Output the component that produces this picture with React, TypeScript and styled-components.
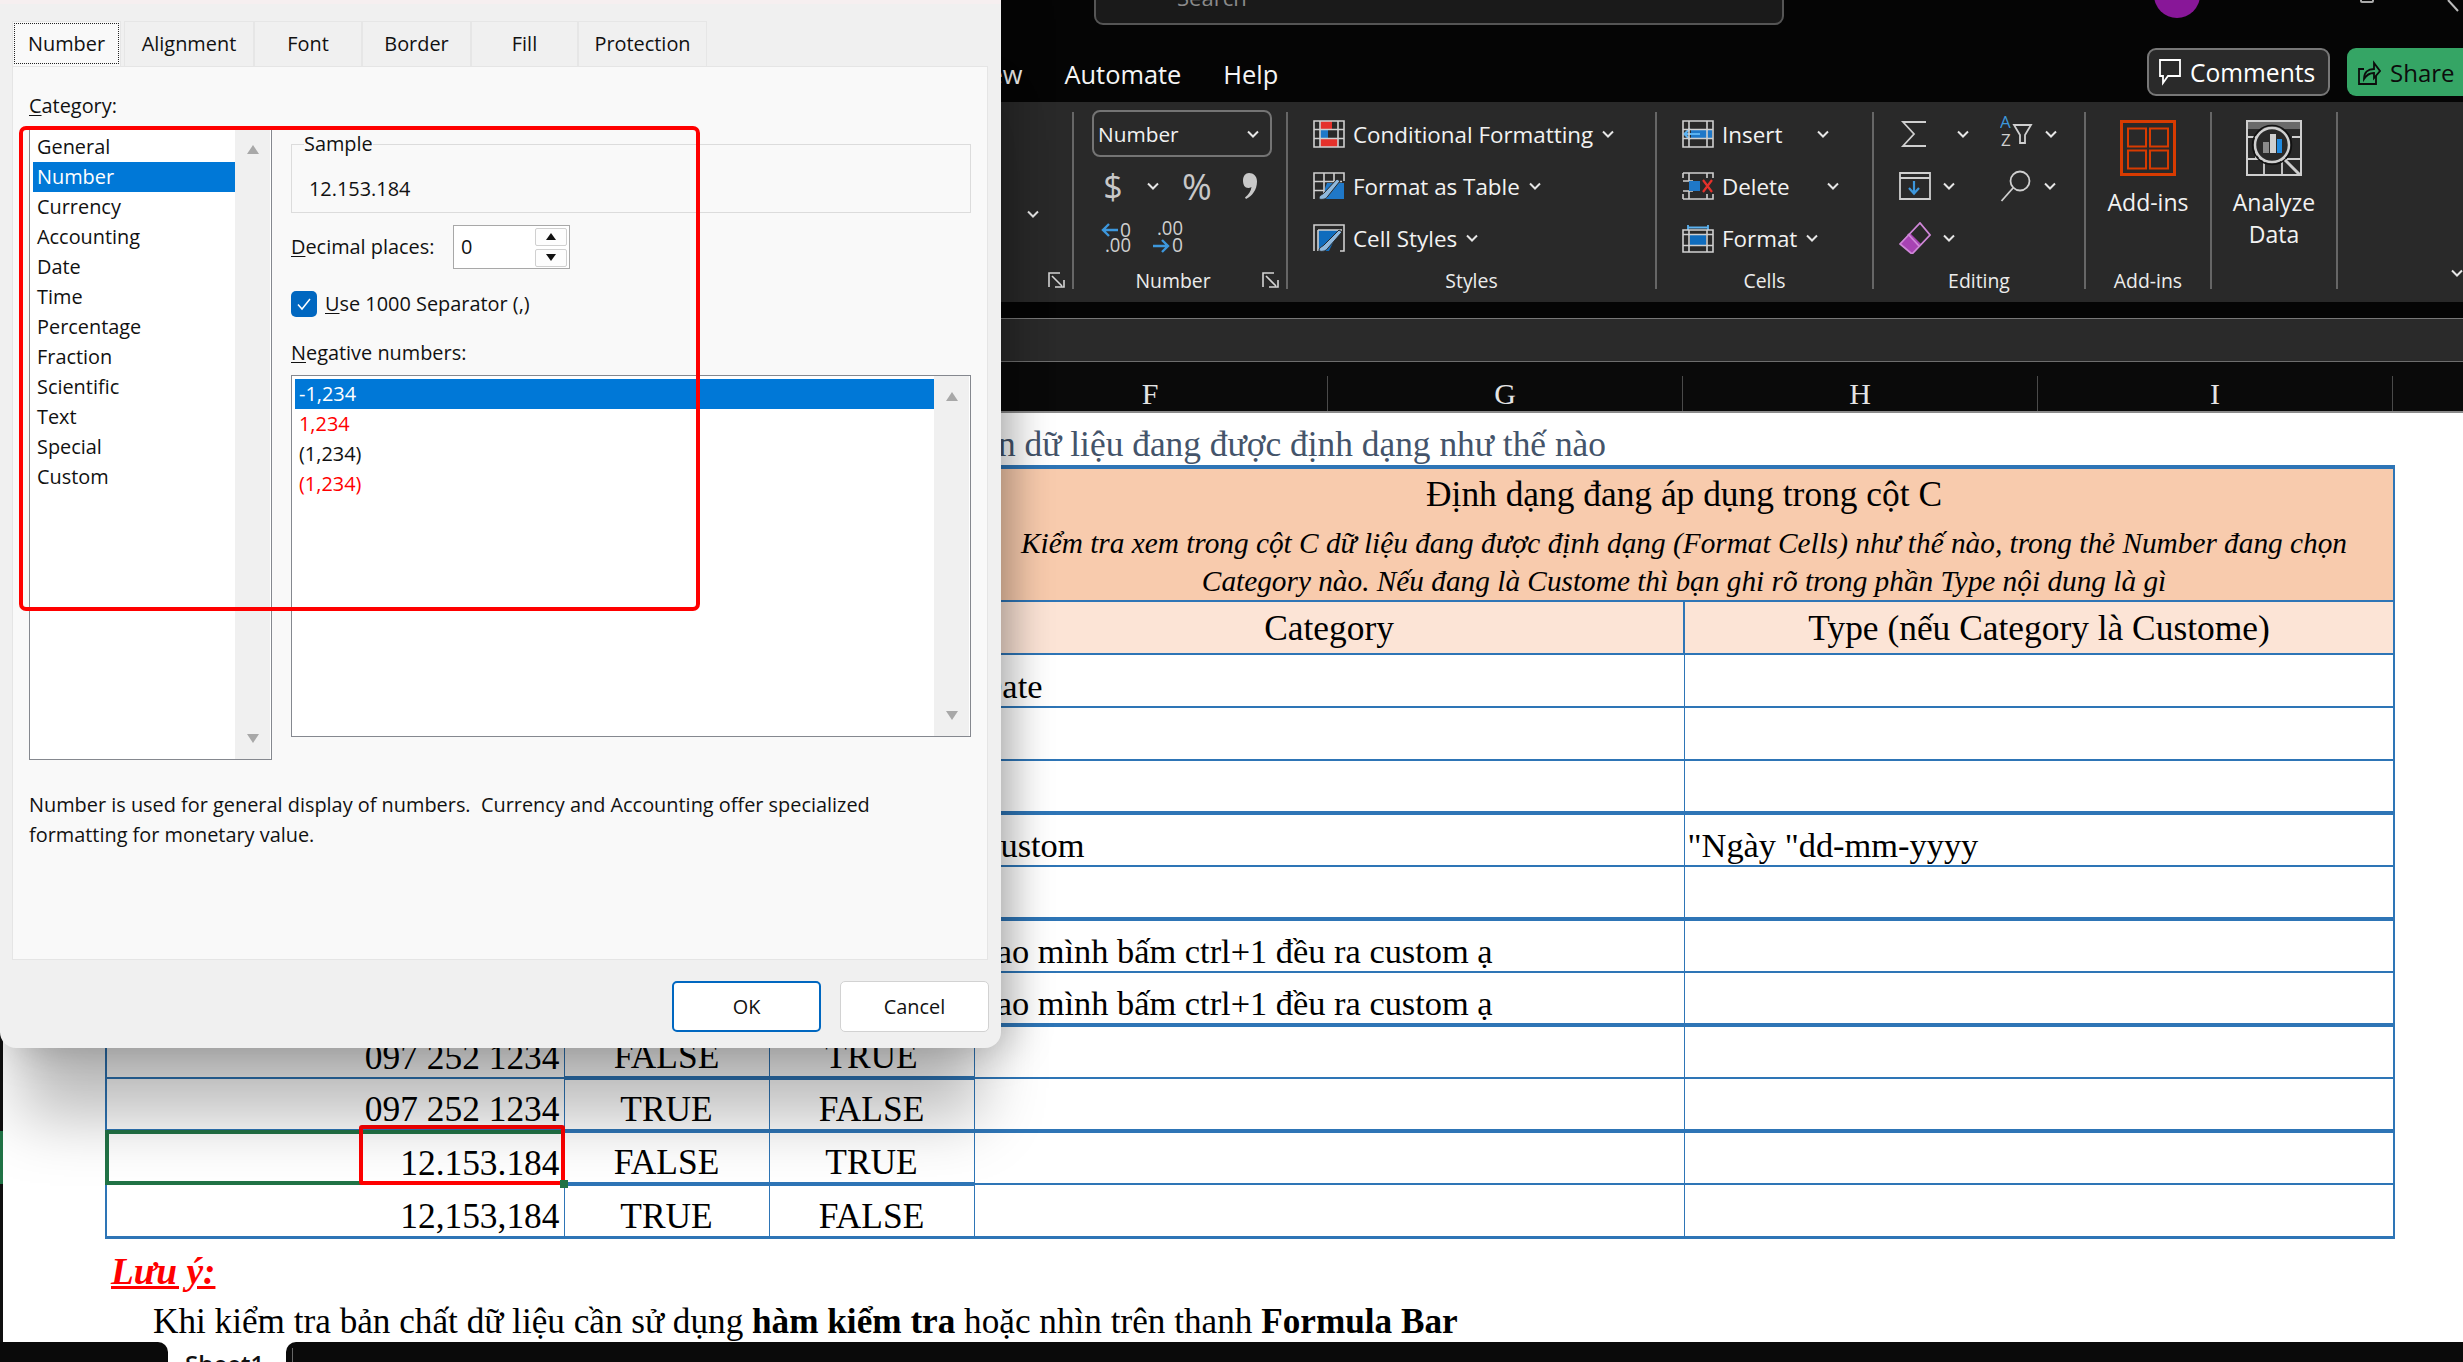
import React from 'react'
import styled, { createGlobalStyle } from 'styled-components'

const ui = `'Open Sans', 'Noto Sans', sans-serif`
const serif = `'Liberation Serif', 'Times New Roman', serif`

const Global = createGlobalStyle`
  html, body { margin: 0; padding: 0; background: #050505; }
  * { box-sizing: border-box; }
`

const Page = styled.div`
  position: relative;
  width: 2463px;
  height: 1362px;
  overflow: hidden;
  display: flex;
  flex-direction: column;
  background: #050505;
  font-family: ${ui};
`

/* title bar */
const TitleBar = styled.div`
  height: 50px;
  flex: none;
  display: flex;
  align-items: flex-start;
  padding-left: 1094px;
  > * {
    flex: none;
  }
`
const SearchBox = styled.div`
  width: 690px;
  height: 40px;
  margin-top: -15px;
  display: flex;
  gap: 41px;
  padding-left: 24px;
  background: #1a1a1a;
  border: 2px solid #555;
  border-radius: 9px;
  color: #8a8a8a;
  font-size: 22px;
  line-height: 20px;
`
const SearchGlyph = styled.svg`
  margin-top: -6px;
`
const Avatar = styled.div`
  width: 46px;
  height: 46px;
  margin: -28px 0 0 370px;
  border-radius: 50%;
  background: #881798;
  color: #fff;
  font-size: 18px;
  line-height: 36px;
  text-align: center;
`
const RestoreBtn = styled.div`
  width: 14px;
  height: 14px;
  margin: -11px 0 0 160px;
  border: 2px solid #aaa;
  border-radius: 2px;
`
const CloseGlyph = styled.svg`
  margin-left: 72px;
`

/* menu row */
const MenuRow = styled.div`
  height: 52px;
  flex: none;
  display: flex;
  align-items: flex-start;
  padding-left: 967px;
`
const MenuItem = styled.span`
  color: #f5f5f5;
  font-size: 25.4px;
  line-height: 48px;
  margin-right: 42px;
`
const CommentsBtn = styled.div`
  margin-left: auto;
  width: 183px;
  height: 48px;
  margin-top: -2px;
  display: flex;
  align-items: center;
  gap: 9px;
  padding-left: 10px;
  background: #2a2a2a;
  border: 2px solid #777;
  border-radius: 9px;
  color: #fff;
  font-size: 24.6px;
`
const ShareBtn = styled.div`
  width: 116px;
  height: 48px;
  margin: -2px 0 0 17px;
  display: flex;
  align-items: center;
  gap: 9px;
  padding-left: 10px;
  background: #35a565;
  border-radius: 9px 0 0 9px;
  color: #0c0c0c;
  font-size: 24px;
`

/* ribbon */
const Ribbon = styled.div`
  height: 200px;
  flex: none;
  display: flex;
  align-items: flex-start;
  padding-top: 10px;
  background: #292929;
  color: #f2f2f2;
`
const Group = styled.div<{ $w: number; $pad?: number }>`
  width: ${(p) => p.$w}px;
  height: 177px;
  flex: none;
  display: flex;
  flex-direction: column;
  padding-left: ${(p) => p.$pad ?? 0}px;
  border-right: 2px solid #666;
`
const GroupBody = styled.div`
  flex: 1;
  min-height: 0;
  margin-top: -4px;
  display: flex;
  flex-direction: column;
`
const GroupFoot = styled.div<{ $pad?: number }>`
  height: 28px;
  margin-bottom: -5px;
  flex: none;
  display: flex;
  align-items: center;
  padding-right: ${(p) => p.$pad ?? 0}px;
`
const GroupLabel = styled.span<{ $shift?: number }>`
  flex: 1;
  text-align: center;
  font-size: 19.4px;
  color: #ececec;
  margin-right: ${(p) => p.$shift ?? 0}px;
`
const ToolRow = styled.div`
  height: 52px;
  flex: none;
  display: flex;
  align-items: center;
`
const ToolText = styled.span<{ $gap?: number }>`
  margin-left: 8px;
  margin-right: ${(p) => p.$gap ?? 9}px;
  font-size: 22.4px;
  white-space: nowrap;
`
const EdgeChevron = styled.div`
  height: 212px;
  flex: none;
  display: flex;
  align-items: center;
  justify-content: flex-end;
  padding-right: 33px;
`
const NumberSelect = styled.div`
  width: 180px;
  height: 47px;
  margin: 2px 0 3px;
  flex: none;
  display: flex;
  align-items: center;
  justify-content: space-between;
  padding: 0 11px 0 4px;
  border: 2px solid #747474;
  border-radius: 8px;
  font-size: 20.8px;
`
const NumCell = styled.span<{ $w: number; $size?: number }>`
  width: ${(p) => p.$w}px;
  flex: none;
  display: flex;
  justify-content: center;
  color: #c8c8c8;
  font-size: ${(p) => p.$size ?? 30}px;
`
const BigTool = styled.div`
  padding-top: 12px;
  display: flex;
  flex-direction: column;
  align-items: center;
  gap: 10px;
  font-size: 23px;
  line-height: 32px;
  text-align: center;
`
const EditGrid = styled.div`
  display: grid;
  grid-template-columns: 101px 1fr;
  grid-auto-rows: 52px;
  align-items: center;
`
const EditTool = styled.div<{ $gap: number }>`
  display: flex;
  align-items: center;
  gap: ${(p) => p.$gap}px;
`
const TailCell = styled.div`
  flex: 1;
  display: flex;
  align-items: flex-end;
  justify-content: flex-end;
  height: 177px;
  padding-bottom: 12px;
`
const Icon = styled.svg`
  flex: none;
`
const RaisedIcon = styled.svg`
  flex: none;
  margin-top: -6px;
`

/* formula bar and headers */
const FormulaGap = styled.div`
  height: 16px;
  flex: none;
  background: #050505;
`
const FormulaBar = styled.div`
  height: 44px;
  flex: none;
  background: #2a2a2a;
  border-top: 1px solid #777;
  border-bottom: 1px solid #6e6e6e;
`
const ColHeaders = styled.div`
  height: 51px;
  flex: none;
  display: flex;
  padding-left: 973px;
  background: #0a0a0a;
  border-bottom: 2px solid #8a8a8a;
`
const ColHead = styled.div<{ $open?: boolean }>`
  width: 355px;
  flex: none;
  margin-top: 14px;
  border-right: ${(p) => (p.$open ? 'none' : '1px solid #4a4a4a')};
  color: #e4e4e4;
  font-family: ${serif};
  font-size: 30px;
  line-height: 36px;
  text-align: center;
`

/* sheet */
const Sheet = styled.div`
  flex: 1;
  min-height: 0;
  display: flex;
  background: #fff;
  overflow: hidden;
`
const Gutter = styled.div`
  width: 3px;
  flex: none;
  background: #101010;
`
const GutterMark = styled.div`
  height: 53px;
  margin-top: 718px;
  background: #217346;
`
const SheetBody = styled.div`
  padding-left: 102px;
  font-family: ${serif};
  font-size: 35.4px;
  color: #000;
`
const SheetTitle = styled.div`
  height: 52px;
  padding-left: 893px;
  line-height: 62px;
  color: #44546a;
  white-space: nowrap;
`
const Table = styled.table`
  width: 2288px;
  table-layout: fixed;
  border-collapse: collapse;
  border-top: 4px solid #2e75b6;
  border-left: 2px solid #2e75b6;
  border-right: 2px solid #2e75b6;
  border-bottom: 3px solid #2e75b6;
`
const Col = styled.col<{ $w: number }>`
  width: ${(p) => p.$w}px;
`
const HeadRow = styled.tr`
  height: 53px;
`
const HeadCell = styled.th<{ $bg: string }>`
  padding: 0;
  background: ${(p) => p.$bg};
  border: 2px solid #2e75b6;
  font-weight: 400;
  text-align: center;
`
const HeadTitle = styled.div`
  line-height: 50px;
`
const HeadNote = styled.div`
  margin-top: 6px;
  font-style: italic;
  font-size: 29.3px;
  line-height: 37.5px;
`
const Row = styled.tr<{ $h: number; $thick?: boolean; $midThick?: boolean }>`
  height: ${(p) => p.$h}px;
  td {
    border-bottom: ${(p) => (p.$thick ? '4px' : '2px')} solid #2e75b6;
  }
  td:nth-child(2),
  td:nth-child(3) {
    border-bottom-width: ${(p) => (p.$thick || p.$midThick ? '4px' : '2px')};
  }
`
const Cell = styled.td<{ $align?: string }>`
  position: relative;
  padding: 0 4px;
  border-left: 1px solid #2e75b6;
  border-right: 1px solid #2e75b6;
  text-align: ${(p) => p.$align ?? 'left'};
  vertical-align: bottom;
  line-height: 40px;
  white-space: nowrap;
`
const TextCell = styled(Cell)`
  padding-left: 3px;
  font-size: 34.4px;
`
const SelectedCell = styled(Cell)`
  outline: 4px solid #217346;
  outline-offset: -3px;
`
const FillHandle = styled.span`
  position: absolute;
  right: -4px;
  bottom: -5px;
  width: 8px;
  height: 8px;
  background: #217346;
`
const CellMark = styled.span`
  position: absolute;
  right: -1px;
  top: -8px;
  width: 206px;
  height: 60px;
  border: 4px solid #ff0000;
  border-radius: 3px;
`
const NoteHead = styled.div`
  height: 55px;
  padding: 12px 0 0 6px;
`
const NoteHeadText = styled.span`
  color: #ff0000;
  font-weight: 700;
  font-style: italic;
  font-size: 37.4px;
  line-height: 40px;
  text-decoration: underline;
`
const NoteLine = styled.div`
  padding: 2px 0 0 48px;
  font-size: 35.2px;
  line-height: 52px;
  white-space: nowrap;
`

/* tabs at the bottom */
const TabStrip = styled.div`
  height: 20px;
  flex: none;
  display: flex;
  background: #fff;
`
const TabLeft = styled.div`
  width: 168px;
  background: #0a0a0a;
  border-radius: 0 10px 0 0;
`
const SheetTab = styled.div`
  width: 118px;
  padding: 7px 0 0 17px;
  font-size: 24px;
  font-weight: 600;
  line-height: 30px;
  color: #111;
`
const TabRight = styled.div`
  flex: 1;
  padding-left: 6px;
  background: #0a0a0a;
  border-radius: 10px 0 0 0;
`
const TabTick = styled.div`
  width: 1px;
  height: 20px;
  margin-top: 6px;
  background: #666;
`

/* Format Cells dialog */
const Dialog = styled.div`
  position: absolute;
  left: 0;
  top: 0;
  z-index: 10;
  width: 1001px;
  height: 1048px;
  padding-top: 17px;
  background: #f0f0f0;
  border-top: 4px solid #f6eff0;
  border-radius: 0 0 16px 16px;
  box-shadow: 0 90px 60px -20px rgba(0, 0, 0, 0.26), 12px 0 40px rgba(0, 0, 0, 0.26);
  color: #111;
  font-size: 19.9px;
  line-height: 30px;
`
const TabBar = styled.div`
  height: 45px;
  display: flex;
  padding-left: 12px;
`
const DialogTab = styled.div<{ $w: number; $active?: boolean }>`
  width: ${(p) => p.$w}px;
  display: flex;
  align-items: center;
  justify-content: center;
  border: 1px solid #e6e6e6;
  border-bottom: none;
  margin-right: ${(p) => (p.$active ? 3 : 0)}px;
  background: ${(p) => (p.$active ? '#f9f9f9' : '#f0f0f0')};
  outline: ${(p) => (p.$active ? '1px dotted #222' : 'none')};
  outline-offset: -3px;
`
const TabPanel = styled.div`
  height: 894px;
  margin: 0 13px 0 12px;
  padding: 24px 16px 0;
  background: #f9f9f9;
  border: 1px solid #e5e5e5;
`
const Key = styled.u`
  text-underline-offset: 2px;
`
const Columns = styled.div`
  display: flex;
  gap: 19px;
  margin-top: 7px;
`
const ListBox = styled.div<{ $w: number; $h: number }>`
  width: ${(p) => p.$w}px;
  height: ${(p) => p.$h}px;
  flex: none;
  display: flex;
  padding: 3px 1px 0 3px;
  background: #fff;
  border: 1px solid #85888f;
`
const ListItems = styled.div`
  flex: 1;
  min-width: 0;
`
const ListItem = styled.div<{ $selected?: boolean; $red?: boolean }>`
  height: 30px;
  padding-left: 4px;
  background: ${(p) => (p.$selected ? '#0078d7' : 'transparent')};
  color: ${(p) => (p.$selected ? '#fff' : p.$red ? '#ff0000' : '#111')};
`
const ScrollTrack = styled.div`
  width: 35px;
  flex: none;
  margin-top: -3px;
  display: flex;
  flex-direction: column;
  align-items: center;
  justify-content: space-between;
  padding: 16px 0;
  background: #f0f0f0;
`
const Arrow = styled.span<{ $down?: boolean }>`
  width: 0;
  height: 0;
  border-left: 6px solid transparent;
  border-right: 6px solid transparent;
  border-${(p) => (p.$down ? 'top' : 'bottom')}: 9px solid #a8a8a8;
`
const RightCol = styled.div`
  width: 680px;
  flex: none;
`
const SampleBox = styled.fieldset`
  height: 83px;
  margin: 2px 0 0;
  padding: 16px 0 0 17px;
  border: 1px solid #dcdcdc;
`
const SampleLegend = styled.legend`
  margin-left: -5px;
  padding: 0;
  line-height: 28px;
`
const DecimalRow = styled.div`
  height: 44px;
  margin-top: 12px;
  display: flex;
  align-items: center;
`
const DecimalLabel = styled.span`
  width: 162px;
  flex: none;
`
const SpinBox = styled.div`
  width: 117px;
  height: 44px;
  display: flex;
  justify-content: space-between;
  align-items: center;
  padding: 0 2px 0 7px;
  background: #fff;
  border: 1px solid #a8a8a8;
`
const SpinButtons = styled.div`
  display: flex;
  flex-direction: column;
  gap: 3px;
`
const SpinButton = styled.div`
  width: 32px;
  height: 18px;
  display: flex;
  align-items: center;
  justify-content: center;
  background: #fdfdfd;
  border: 1px solid #d0d0d0;
  border-radius: 2px;
`
const SpinArrow = styled.span<{ $down?: boolean }>`
  width: 0;
  height: 0;
  border-left: 5px solid transparent;
  border-right: 5px solid transparent;
  border-${(p) => (p.$down ? 'top' : 'bottom')}: 7px solid #111;
`
const CheckRow = styled.div`
  height: 26px;
  margin-top: 22px;
  display: flex;
  align-items: center;
  gap: 8px;
`
const CheckBox = styled.span`
  width: 26px;
  height: 26px;
  display: flex;
  align-items: center;
  justify-content: center;
  background: #0067c0;
  border-radius: 5px;
`
const NegLabel = styled.div`
  margin: 21px 0 7px;
`
const Description = styled.div`
  margin-top: 30px;
  white-space: nowrap;
`
const DialogFooter = styled.div`
  display: flex;
  justify-content: flex-end;
  gap: 19px;
  margin-top: 21px;
  padding-right: 12px;
`
const DialogButton = styled.div<{ $primary?: boolean }>`
  width: 149px;
  height: 51px;
  display: flex;
  align-items: center;
  justify-content: center;
  background: #fff;
  border: ${(p) => (p.$primary ? '2px solid #0067c0' : '1px solid #d2d2d2')};
  border-radius: 5px;
`
const RedFrame = styled.div`
  position: absolute;
  left: 19px;
  top: 122px;
  width: 681px;
  height: 485px;
  border: 4px solid #ff0000;
  border-radius: 7px;
  pointer-events: none;
`

/* icons */
const G = '#cfcfcf'
const B = '#1f78c8'
const R = '#e5312b'

const Chevron = () => (
  <Icon width="12" height="8" viewBox="0 0 12 8" fill="none" stroke="#e6e6e6" strokeWidth="2">
    <path d="M1 1.5l5 5 5-5" />
  </Icon>
)
const Launcher = () => (
  <Icon width="17" height="16" viewBox="0 0 17 16" fill="none" stroke="#d4d4d4" strokeWidth="1.6">
    <path d="M1 15V1h11M4 4l10 10M7 15h9V8" />
  </Icon>
)
const TableGrid = ({ children }: { children?: React.ReactNode }) => (
  <Icon width="32" height="28" viewBox="0 0 32 28" fill="none">
    {children}
    <path d="M1 1h30v26H1zM7 1v26M25 1v26M1 9.5h30M1 18.5h30" stroke={G} strokeWidth="1.6" />
  </Icon>
)
const CondIcon = () => (
  <TableGrid>
    <rect x="7" y="1" width="12" height="8" fill={R} />
    <rect x="7" y="10" width="8" height="8" fill={B} />
    <rect x="7" y="19" width="18" height="8" fill={R} />
  </TableGrid>
)
const TableIcon = () => (
  <Icon width="32" height="28" viewBox="0 0 32 28" fill="none">
    <path d="M14 11h17v16H8z" fill={B} />
    <path d="M1 27V1h30v8M1 9.5h28M11 1v26M21 1v8M1 18.5h10" stroke={G} strokeWidth="1.6" />
    <path d="M6 27c0-4 3-4 5-6l13-14 3 2-12 15c-2 3-5 4-9 3z" fill="#8fb8dc" stroke="#292929" strokeWidth="1" />
  </Icon>
)
const StyleIcon = () => (
  <Icon width="32" height="28" viewBox="0 0 32 28" fill="none">
    <path d="M5 6h21L16 27H5z" fill="#0f6cbd" />
    <path d="M1 27V1h30v26h-4M5 6h24M5 6v21" stroke={G} strokeWidth="1.6" />
    <path d="M6 27c0-4 3-4 5-6l15-15 3 2-14 16c-2 3-5 4-9 3z" fill="#8fb8dc" stroke="#292929" strokeWidth="1" />
  </Icon>
)
const InsertIcon = () => (
  <TableGrid>
    <rect x="9" y="10" width="21" height="8" fill={B} />
    <path d="M18 14H3M8 8.5L2.5 14 8 19.5" stroke="#5cb2f0" strokeWidth="2.2" />
  </TableGrid>
)
const DeleteIcon = () => (
  <Icon width="32" height="28" viewBox="0 0 32 28" fill="none">
    <path d="M1 1h30v5M1 1v5M1 27h30v-5M1 27v-5M7 1v8M25 1v5M7 19v8M25 22v5M1 9h10M1 19h10" stroke={G} strokeWidth="1.6" />
    <rect x="7" y="9" width="11" height="10" fill={B} />
    <path d="M21 8l9 12M30 8l-9 12" stroke={R} strokeWidth="2.2" />
  </Icon>
)
const FormatIcon = () => (
  <Icon width="32" height="30" viewBox="0 0 32 30" fill="none">
    <path d="M6 2v5M26 2v5M6 4.5h20" stroke="#5cb2f0" strokeWidth="1.8" />
    <rect x="8" y="11" width="16" height="11" fill="#0f6cbd" />
    <path d="M1 7h30v22H1zM7 7v22M25 7v22M1 11.5h30M1 22.5h30" stroke={G} strokeWidth="1.6" />
  </Icon>
)
const SigmaIcon = () => (
  <Icon width="30" height="28" viewBox="-2 0 30 28" fill="none" stroke={G} strokeWidth="1.8">
    <path d="M25 2H2l11 12L2 26h23" />
  </Icon>
)
const SortIcon = () => (
  <RaisedIcon width="34" height="34" viewBox="0 0 34 34" fill="none">
    <text x="0" y="14" fontFamily={ui} fontSize="17" fill="#3d97dc">A</text>
    <text x="1" y="32" fontFamily={ui} fontSize="17" fill={G}>Z</text>
    <path d="M14 11h17l-6 10v8h-5v-8z" stroke={G} strokeWidth="1.8" />
  </RaisedIcon>
)
const FillIcon = () => (
  <Icon width="32" height="28" viewBox="0 0 32 28" fill="none">
    <path d="M1 1h30v26H1zM1 6h30" stroke={G} strokeWidth="1.8" />
    <path d="M15 9v12M10 16l5 5.5 5-5.5" stroke="#3d97dc" strokeWidth="2.2" />
  </Icon>
)
const FindIcon = () => (
  <Icon width="32" height="32" viewBox="0 0 32 32" fill="none" stroke={G} strokeWidth="1.8">
    <circle cx="20" cy="11" r="9.5" />
    <path d="M13 18L1.5 31" />
  </Icon>
)
const EraserIcon = () => (
  <Icon width="32" height="32" viewBox="0 0 32 32" fill="none">
    <path d="M1 22l10-11 11 11-9 10z" fill="#a743b3" />
    <path d="M1 22L21 1l10 12-18 19z" stroke="#cf86d8" strokeWidth="1.8" />
    <path d="M9 12l11 12" stroke="#cf86d8" strokeWidth="1.8" />
  </Icon>
)
const AddinsIcon = () => (
  <Icon width="56" height="56" viewBox="0 0 56 56" fill="none" stroke="#d83b01">
    <rect x="1.5" y="1.5" width="53" height="53" strokeWidth="3" />
    <path d="M8 8.5h18v18H8zM30 8.5h18v18H30zM8 30.5h18v18H8zM30 30.5h18v18H30z" strokeWidth="2" />
  </Icon>
)
const AnalyzeIcon = () => (
  <Icon width="56" height="56" viewBox="0 0 56 56" fill="none">
    <rect x="1" y="1" width="54" height="54" stroke={G} strokeWidth="2" />
    <rect x="2" y="2" width="52" height="7" fill="#6a6a6a" />
    <path d="M1 17h9M46 17h9M1 39h22M33 39h22M18 39v16M36 39v16M10 17v22" stroke={G} strokeWidth="1.8" />
    <circle cx="26" cy="25" r="17" fill="#292929" stroke={G} strokeWidth="2.5" />
    <circle cx="26" cy="25" r="19.5" stroke="#111" strokeWidth="1.5" />
    <rect x="17" y="22" width="6" height="11" fill="#8a8a8a" />
    <rect x="24" y="14" width="6" height="19" fill={G} />
    <rect x="31" y="19" width="5" height="14" fill="#1f8ae0" />
    <path d="M39 40l15 15" stroke={G} strokeWidth="3" />
  </Icon>
)
const CommentIcon = () => (
  <Icon width="22" height="30" viewBox="0 0 22 30" fill="none" stroke="#fff" strokeWidth="1.8">
    <path d="M1 3h20v16H9l-5 7v-7H1z" />
  </Icon>
)
const ShareIcon = () => (
  <Icon width="24" height="32" viewBox="0 0 24 32" fill="none" stroke="#0c0c0c" strokeWidth="1.8">
    <path d="M7 13H2v15h17v-8" />
    <path d="M7 23c0-7 4-10 10-10V7l6 8-6 7v-5c-4 0-7 1-10 6z" />
  </Icon>
)
const CommaIcon = () => (
  <Icon width="16" height="28" viewBox="0 0 16 28" fill="#c8c8c8">
    <path d="M7 1c4.5 0 8 3 8 8.500C15 18 10 24 4 27l-1-1.5c3.5-3 6-6.500 6.500-10.500-1 .6-2 1-3.200 1C2.800 16 1 13 1 8.500 1 4 3.500 1 7 1z" />
  </Icon>
)
const DecLeftIcon = () => (
  <Icon width="32" height="46" viewBox="0 0 32 46" fill="none">
    <path d="M17 15H2M8 9l-6 6 6 6" stroke="#3d97dc" strokeWidth="2.4" />
    <text x="19" y="22" fontFamily={ui} fontSize="20" textLength="11" lengthAdjust="spacingAndGlyphs" fill={G}>0</text>
    <text x="4" y="37" fontFamily={ui} fontSize="20" textLength="26" lengthAdjust="spacingAndGlyphs" fill={G}>.00</text>
  </Icon>
)
const DecRightIcon = () => (
  <Icon width="32" height="46" viewBox="0 0 32 46" fill="none">
    <text x="5" y="20" fontFamily={ui} fontSize="20" textLength="26" lengthAdjust="spacingAndGlyphs" fill={G}>.00</text>
    <path d="M1 31h15M10 25l6 6-6 6" stroke="#3d97dc" strokeWidth="2.4" />
    <text x="20" y="37" fontFamily={ui} fontSize="20" textLength="11" lengthAdjust="spacingAndGlyphs" fill={G}>0</text>
  </Icon>
)
const CheckMark = () => (
  <Icon width="16" height="14" viewBox="0 0 16 14" fill="none" stroke="#fff" strokeWidth="1.5">
    <path d="M2 7.5l4 4.5 8-10" />
  </Icon>
)

const categories = [
  'General',
  'Number',
  'Currency',
  'Accounting',
  'Date',
  'Time',
  'Percentage',
  'Fraction',
  'Scientific',
  'Text',
  'Special',
  'Custom',
]
const dialogTabs: [string, number][] = [
  ['Alignment', 130],
  ['Font', 108],
  ['Border', 109],
  ['Fill', 107],
  ['Protection', 129],
]
const negatives: { label: string; red?: boolean; selected?: boolean }[] = [
  { label: '-1,234', selected: true },
  { label: '1,234', red: true },
  { label: '(1,234)' },
  { label: '(1,234)', red: true },
]

type SheetRow = {
  h: number
  value?: string
  d?: string
  e?: string
  category?: string
  type?: string
  thick?: boolean
  midThick?: boolean
  selected?: boolean
}
const rows: SheetRow[] = [
  { h: 53, category: 'Date' },
  { h: 53 },
  { h: 53, thick: true },
  { h: 53, category: 'Custom', type: '"Ngày "dd-mm-yyyy' },
  { h: 53, thick: true },
  { h: 53, category: 'Sao mình bấm ctrl+1 đều ra custom ạ' },
  { h: 53, category: 'Sao mình bấm ctrl+1 đều ra custom ạ', thick: true },
  { h: 53, value: '097 252 1234', d: 'FALSE', e: 'TRUE', midThick: true },
  { h: 53, value: '097 252 1234', d: 'TRUE', e: 'FALSE', thick: true },
  { h: 53, value: '12.153.184', d: 'FALSE', e: 'TRUE', selected: true, midThick: true },
  { h: 53, value: '12,153,184', d: 'TRUE', e: 'FALSE' },
]

const FormatCellsDialog = () => (
  <Dialog>
    <TabBar>
      <DialogTab $w={109} $active>
        Number
      </DialogTab>
      {dialogTabs.map(([label, w]) => (
        <DialogTab key={label} $w={w}>
          {label}
        </DialogTab>
      ))}
    </TabBar>
    <TabPanel>
      <div>
        <Key>C</Key>ategory:
      </div>
      <Columns>
        <ListBox $w={243} $h={632}>
          <ListItems>
            {categories.map((c) => (
              <ListItem key={c} $selected={c === 'Number'}>
                {c}
              </ListItem>
            ))}
          </ListItems>
          <ScrollTrack>
            <Arrow />
            <Arrow $down />
          </ScrollTrack>
        </ListBox>
        <RightCol>
          <SampleBox>
            <SampleLegend>Sample</SampleLegend>
            12.153.184
          </SampleBox>
          <DecimalRow>
            <DecimalLabel>
              <Key>D</Key>ecimal places:
            </DecimalLabel>
            <SpinBox>
              0
              <SpinButtons>
                <SpinButton>
                  <SpinArrow />
                </SpinButton>
                <SpinButton>
                  <SpinArrow $down />
                </SpinButton>
              </SpinButtons>
            </SpinBox>
          </DecimalRow>
          <CheckRow>
            <CheckBox>
              <CheckMark />
            </CheckBox>
            <span>
              <Key>U</Key>se 1000 Separator (,)
            </span>
          </CheckRow>
          <NegLabel>
            <Key>N</Key>egative numbers:
          </NegLabel>
          <ListBox $w={680} $h={362}>
            <ListItems>
              {negatives.map((n, i) => (
                <ListItem key={i} $selected={n.selected} $red={n.red}>
                  {n.label}
                </ListItem>
              ))}
            </ListItems>
            <ScrollTrack>
              <Arrow />
              <Arrow $down />
            </ScrollTrack>
          </ListBox>
        </RightCol>
      </Columns>
      <Description>
        Number is used for general display of numbers.&nbsp; Currency and Accounting offer specialized
        <br />
        formatting for monetary value.
      </Description>
    </TabPanel>
    <DialogFooter>
      <DialogButton $primary>OK</DialogButton>
      <DialogButton>Cancel</DialogButton>
    </DialogFooter>
    <RedFrame />
  </Dialog>
)

const RibbonBar = () => (
  <Ribbon>
    <Group $w={1074}>
      <GroupBody>
        <EdgeChevron>
          <Chevron />
        </EdgeChevron>
      </GroupBody>
      <GroupFoot $pad={7}>
        <GroupLabel />
        <Launcher />
      </GroupFoot>
    </Group>
    <Group $w={214} $pad={18}>
      <GroupBody>
        <NumberSelect>
          Number
          <Chevron />
        </NumberSelect>
        <ToolRow>
          <NumCell $w={42} $size={34}>$</NumCell>
          <NumCell $w={38}>
            <Chevron />
          </NumCell>
          <NumCell $w={50} $size={36}>%</NumCell>
          <NumCell $w={56}>
            <CommaIcon />
          </NumCell>
        </ToolRow>
        <ToolRow>
          <NumCell $w={50}>
            <DecLeftIcon />
          </NumCell>
          <NumCell $w={52}>
            <DecRightIcon />
          </NumCell>
        </ToolRow>
      </GroupBody>
      <GroupFoot $pad={7}>
        <GroupLabel $shift={8}>Number</GroupLabel>
        <Launcher />
      </GroupFoot>
    </Group>
    <Group $w={369} $pad={25}>
      <GroupBody>
        <ToolRow>
          <CondIcon />
          <ToolText>Conditional Formatting</ToolText>
          <Chevron />
        </ToolRow>
        <ToolRow>
          <TableIcon />
          <ToolText>Format as Table</ToolText>
          <Chevron />
        </ToolRow>
        <ToolRow>
          <StyleIcon />
          <ToolText>Cell Styles</ToolText>
          <Chevron />
        </ToolRow>
      </GroupBody>
      <GroupFoot>
        <GroupLabel $shift={25}>Styles</GroupLabel>
      </GroupFoot>
    </Group>
    <Group $w={217} $pad={25}>
      <GroupBody>
        <ToolRow>
          <InsertIcon />
          <ToolText $gap={35}>Insert</ToolText>
          <Chevron />
        </ToolRow>
        <ToolRow>
          <DeleteIcon />
          <ToolText $gap={37}>Delete</ToolText>
          <Chevron />
        </ToolRow>
        <ToolRow>
          <FormatIcon />
          <ToolText>Format</ToolText>
          <Chevron />
        </ToolRow>
      </GroupBody>
      <GroupFoot>
        <GroupLabel $shift={25}>Cells</GroupLabel>
      </GroupFoot>
    </Group>
    <Group $w={212} $pad={25}>
      <GroupBody>
        <EditGrid>
          <EditTool $gap={28}>
            <SigmaIcon />
            <Chevron />
          </EditTool>
          <EditTool $gap={11}>
            <SortIcon />
            <Chevron />
          </EditTool>
          <EditTool $gap={12}>
            <FillIcon />
            <Chevron />
          </EditTool>
          <EditTool $gap={12}>
            <FindIcon />
            <Chevron />
          </EditTool>
          <EditTool $gap={12}>
            <EraserIcon />
            <Chevron />
          </EditTool>
        </EditGrid>
      </GroupBody>
      <GroupFoot>
        <GroupLabel $shift={25}>Editing</GroupLabel>
      </GroupFoot>
    </Group>
    <Group $w={126}>
      <GroupBody>
        <BigTool>
          <AddinsIcon />
          Add-ins
        </BigTool>
      </GroupBody>
      <GroupFoot>
        <GroupLabel>Add-ins</GroupLabel>
      </GroupFoot>
    </Group>
    <Group $w={126}>
      <GroupBody>
        <BigTool>
          <AnalyzeIcon />
          <span>
            Analyze
            <br />
            Data
          </span>
        </BigTool>
      </GroupBody>
    </Group>
    <TailCell>
      <Chevron />
    </TailCell>
  </Ribbon>
)

const SheetTable = () => (
  <Table>
    <colgroup>
      <Col $w={458} />
      <Col $w={205} />
      <Col $w={205} />
      <Col $w={710} />
      <Col $w={710} />
    </colgroup>
    <thead>
      <tr>
        <HeadCell $bg="#f8cbad" colSpan={3} rowSpan={2} />
        <HeadCell $bg="#f8cbad" colSpan={2}>
          <HeadTitle>Định dạng đang áp dụng trong cột C</HeadTitle>
          <HeadNote>
            Kiểm tra xem trong cột C dữ liệu đang được định dạng (Format Cells) như thế nào, trong thẻ Number đang chọn
            <br />
            Category nào. Nếu đang là Custome thì bạn ghi rõ trong phần Type nội dung là gì
          </HeadNote>
        </HeadCell>
      </tr>
      <HeadRow>
        <HeadCell $bg="#fce4d6">Category</HeadCell>
        <HeadCell $bg="#fce4d6">Type (nếu Category là Custome)</HeadCell>
      </HeadRow>
    </thead>
    <tbody>
      {rows.map((r, i) => (
        <Row key={i} $h={r.h} $thick={r.thick} $midThick={r.midThick}>
          {r.selected ? (
            <SelectedCell $align="right">
              {r.value}
              <CellMark />
              <FillHandle />
            </SelectedCell>
          ) : (
            <Cell $align="right">{r.value}</Cell>
          )}
          <Cell $align="center">{r.d}</Cell>
          <Cell $align="center">{r.e}</Cell>
          <TextCell>{r.category}</TextCell>
          <TextCell>{r.type}</TextCell>
        </Row>
      ))}
    </tbody>
  </Table>
)

export default function App() {
  return (
    <Page>
      <Global />
      <TitleBar>
        <SearchBox>
          <SearchGlyph width="16" height="18" viewBox="0 0 16 18" fill="none" stroke="#777" strokeWidth="2">
            <path d="M14 1L2 16" />
          </SearchGlyph>
          Search
        </SearchBox>
        <Avatar>LT</Avatar>
        <RestoreBtn />
        <CloseGlyph width="16" height="12" viewBox="0 0 16 12" fill="none" stroke="#bbb" strokeWidth="2">
          <path d="M2 0l10 11" />
        </CloseGlyph>
      </TitleBar>
      <MenuRow>
        <MenuItem>View</MenuItem>
        <MenuItem>Automate</MenuItem>
        <MenuItem>Help</MenuItem>
        <CommentsBtn>
          <CommentIcon />
          Comments
        </CommentsBtn>
        <ShareBtn>
          <ShareIcon />
          Share
        </ShareBtn>
      </MenuRow>
      <RibbonBar />
      <FormulaGap />
      <FormulaBar />
      <ColHeaders>
        {['F', 'G', 'H', 'I'].map((c) => (
          <ColHead key={c}>{c}</ColHead>
        ))}
        <ColHead $open>J</ColHead>
      </ColHeaders>
      <Sheet>
        <Gutter>
          <GutterMark />
        </Gutter>
        <SheetBody>
          <SheetTitle>n dữ liệu đang được định dạng như thế nào</SheetTitle>
          <SheetTable />
          <NoteHead>
            <NoteHeadText>Lưu ý:</NoteHeadText>
          </NoteHead>
          <NoteLine>
            Khi kiểm tra bản chất dữ liệu cần sử dụng <b>hàm kiểm tra</b> hoặc nhìn trên thanh <b>Formula Bar</b>
          </NoteLine>
        </SheetBody>
      </Sheet>
      <TabStrip>
        <TabLeft />
        <SheetTab>Sheet1</SheetTab>
        <TabRight>
          <TabTick />
        </TabRight>
      </TabStrip>
      <FormatCellsDialog />
    </Page>
  )
}
